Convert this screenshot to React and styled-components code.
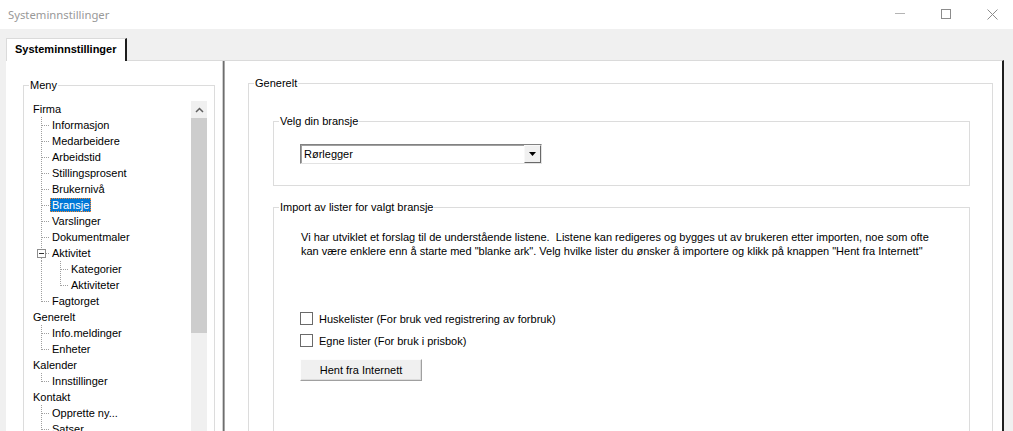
import React from "react";
import styled, { createGlobalStyle } from "styled-components";

const GlobalStyle = createGlobalStyle`
  html, body {
    margin: 0;
    padding: 0;
  }
  body {
    width: 1013px;
    height: 431px;
    overflow: hidden;
    background: #f0f0f0;
    font-family: "Liberation Sans", Arial, sans-serif;
    font-size: 11px;
    color: #000;
  }
`;

const Window = styled.div`
  width: 1013px;
  height: 431px;
  display: flex;
  flex-direction: column;
  overflow: hidden;
  background: #f0f0f0;
`;

const TitleBar = styled.div`
  height: 29px;
  flex: none;
  display: flex;
  justify-content: space-between;
  background: #fff;
`;

const Title = styled.span`
  padding-left: 8px;
  line-height: 29px;
  font-family: "Noto Sans", "Open Sans", sans-serif;
  font-size: 11.3px;
  color: #999;
`;

const Controls = styled.div`
  display: flex;
  margin-right: -2px;
`;

const ControlButton = styled.div`
  width: 46px;
  display: flex;
  justify-content: center;
  padding-top: 9px;
  svg {
    display: block;
  }
`;

const Workspace = styled.div`
  flex: 1;
  min-height: 0;
  display: flex;
  flex-direction: column;
  padding: 9px 9px 0 6px;
`;

const TabStrip = styled.div`
  display: flex;
  flex: none;
`;

const Tab = styled.div`
  position: relative;
  z-index: 1;
  box-sizing: border-box;
  width: 121px;
  height: 23px;
  margin-bottom: -1px;
  padding: 4px 0 0 8px;
  background: #fff;
  border: 1px solid #dadada;
  border-right: 2px solid #1e1e1e;
  border-bottom: none;
  font-weight: bold;
  white-space: nowrap;
`;

const TabPage = styled.div`
  flex: 1;
  min-height: 0;
  display: flex;
  background: #fff;
  border-top: 1px solid #dadada;
  border-right: 2px solid #1e1e1e;
  overflow: hidden;
`;

const LeftPanel = styled.div`
  width: 216px;
  flex: none;
  box-sizing: border-box;
  padding: 18px 7px 0 17px;
`;

const Splitter = styled.div`
  width: 3px;
  flex: none;
  background: linear-gradient(to right, #d0d0d0 0 1px, #6e6e6e 1px 2px, #a8a8a8 2px 3px);
`;

const RightPanel = styled.div`
  flex: 1;
  min-width: 0;
  padding: 16px 9px 0 23px;
`;

// group box: the legend sits on the top border, the body carries the inner spacing
const GroupBox = styled.fieldset`
  margin: ${(p) => p.$margin || "0"};
  min-width: 0;
  padding: 0;
  border: 1px solid #dcdcdc;
`;

const Legend = styled.legend`
  margin-left: 5px;
  padding: 0 1px;
  line-height: 13px;
`;

const GroupBody = styled.div`
  padding: ${(p) => p.$pad};
`;

/* ---------- tree view ---------- */

const TreeView = styled.div`
  display: flex;
`;

const TreeList = styled.div`
  flex: 1;
  padding-left: 4px;
`;

const TreeRow = styled.div`
  display: flex;
  align-items: center;
  height: 16px;
  white-space: nowrap;
  svg {
    display: block;
    flex: none;
  }
`;

const NodeLabel = styled.span`
  padding: 0 2px;
  line-height: 14px;
  color: ${(p) => (p.$selected ? "#fff" : "#000")};
  background: ${(p) => (p.$selected ? "#0078d7" : "transparent")};
  outline: ${(p) => (p.$selected ? "1px dotted #ff8728" : "none")};
  outline-offset: -1px;
`;

const ScrollBar = styled.div`
  width: 16px;
  flex: none;
  display: flex;
  flex-direction: column;
  background: #f0f0f0;
`;

const ScrollArrow = styled.div`
  height: 17px;
  display: flex;
  align-items: center;
  justify-content: center;
`;

const ScrollThumb = styled.div`
  height: 215px;
  background: #cdcdcd;
`;

const dot = { stroke: "#a0a0a0", strokeWidth: 1, strokeDasharray: "1 1" };

function Guide({ kind }) {
  return (
    <svg width="19" height="16" viewBox="0 0 19 16">
      {kind === "pipe" && <line x1="10.5" y1="0" x2="10.5" y2="16" {...dot} />}
      {kind === "tee" && (
        <>
          <line x1="10.5" y1="0" x2="10.5" y2="16" {...dot} />
          <line x1="11" y1="8.5" x2="19" y2="8.5" {...dot} />
        </>
      )}
      {kind === "elbow" && (
        <>
          <line x1="10.5" y1="0" x2="10.5" y2="9" {...dot} />
          <line x1="11" y1="8.5" x2="19" y2="8.5" {...dot} />
        </>
      )}
      {kind === "minus" && (
        <>
          <line x1="10.5" y1="0" x2="10.5" y2="4" {...dot} />
          <line x1="10.5" y1="13" x2="10.5" y2="16" {...dot} />
          <line x1="15" y1="8.5" x2="19" y2="8.5" {...dot} />
          <rect x="6.5" y="4.5" width="8" height="8" fill="#fff" stroke="#8e8e8e" />
          <line x1="8" y1="8.5" x2="13" y2="8.5" stroke="#333" />
        </>
      )}
    </svg>
  );
}

const menu = [
  { label: "Firma", guides: [] },
  { label: "Informasjon", guides: ["tee"] },
  { label: "Medarbeidere", guides: ["tee"] },
  { label: "Arbeidstid", guides: ["tee"] },
  { label: "Stillingsprosent", guides: ["tee"] },
  { label: "Brukernivå", guides: ["tee"] },
  { label: "Bransje", guides: ["tee"], selected: true },
  { label: "Varslinger", guides: ["tee"] },
  { label: "Dokumentmaler", guides: ["tee"] },
  { label: "Aktivitet", guides: ["minus"] },
  { label: "Kategorier", guides: ["pipe", "tee"] },
  { label: "Aktiviteter", guides: ["pipe", "elbow"] },
  { label: "Fagtorget", guides: ["elbow"] },
  { label: "Generelt", guides: [] },
  { label: "Info.meldinger", guides: ["tee"] },
  { label: "Enheter", guides: ["elbow"] },
  { label: "Kalender", guides: [] },
  { label: "Innstillinger", guides: ["elbow"] },
  { label: "Kontakt", guides: [] },
  { label: "Opprette ny...", guides: ["tee"] },
  { label: "Satser", guides: ["tee"] },
];

/* ---------- form controls ---------- */

const ComboBox = styled.div`
  box-sizing: border-box;
  width: 242px;
  height: 20px;
  display: flex;
  border: 1px solid;
  border-color: #828282 #e3e3e3 #e3e3e3 #828282;
  box-shadow: inset 1px 1px 0 #a0a0a0;
  background: #fff;
`;

const ComboText = styled.span`
  flex: 1;
  padding-left: 3px;
  line-height: 18px;
`;

const ComboButton = styled.div`
  box-sizing: border-box;
  width: 17px;
  display: flex;
  align-items: center;
  justify-content: center;
  background: #f0f0f0;
  border: 1px solid;
  border-color: #f8f8f8 #696969 #696969 #f8f8f8;
`;

const Intro = styled.p`
  margin: 0 0 0 1px;
  line-height: 14px;
  white-space: nowrap;
`;

const CheckList = styled.div`
  display: flex;
  flex-direction: column;
  gap: 5px;
  margin-top: 52px;
`;

const CheckRow = styled.label`
  display: flex;
  align-items: center;
  gap: 6px;
  height: 17px;
`;

const CheckBox = styled.span`
  box-sizing: border-box;
  width: 13px;
  height: 13px;
  border: 1px solid #6a6a6a;
  background: #fff;
`;

const PushButton = styled.div`
  box-sizing: border-box;
  width: 122px;
  height: 22px;
  margin-top: 10px;
  display: flex;
  align-items: center;
  justify-content: center;
  background: #f0f0f0;
  border: 1px solid;
  border-color: #fdfdfd #a0a0a0 #a0a0a0 #fdfdfd;
  box-shadow: inset -1px -1px 0 #dcdcdc;
`;

export default function App() {
  return (
    <Window>
      <GlobalStyle />
      <TitleBar>
        <Title>Systeminnstillinger</Title>
        <Controls>
          <ControlButton>
            <svg width="10" height="10" viewBox="0 0 10 10">
              <line x1="0" y1="4.5" x2="10" y2="4.5" stroke="#b4b4b4" />
            </svg>
          </ControlButton>
          <ControlButton>
            <svg width="10" height="10" viewBox="0 0 10 10">
              <rect x="0.5" y="0.5" width="9" height="9" fill="none" stroke="#8c8c8c" />
            </svg>
          </ControlButton>
          <ControlButton>
            <svg width="11" height="11" viewBox="0 0 11 11">
              <path d="M0.5 0.5 L10.5 10.5 M10.5 0.5 L0.5 10.5" stroke="#8c8c8c" />
            </svg>
          </ControlButton>
        </Controls>
      </TitleBar>

      <Workspace>
        <TabStrip>
          <Tab>Systeminnstillinger</Tab>
        </TabStrip>

        <TabPage>
          <LeftPanel>
            <GroupBox>
              <Legend>Meny</Legend>
              <GroupBody $pad="9px 7px 0 3px">
                <TreeView>
                  <TreeList>
                    {menu.map((node) => (
                      <TreeRow key={node.label}>
                        {node.guides.map((g, i) => (
                          <Guide key={i} kind={g} />
                        ))}
                        <NodeLabel $selected={node.selected}>{node.label}</NodeLabel>
                      </TreeRow>
                    ))}
                  </TreeList>
                  <ScrollBar>
                    <ScrollArrow>
                      <svg width="9" height="6" viewBox="0 0 9 6">
                        <path d="M1 5 L4.5 1.5 L8 5" fill="none" stroke="#606060" strokeWidth="1.5" />
                      </svg>
                    </ScrollArrow>
                    <ScrollThumb />
                  </ScrollBar>
                </TreeView>
              </GroupBody>
            </GroupBox>
          </LeftPanel>

          <Splitter />

          <RightPanel>
            <GroupBox>
              <Legend>Generelt</Legend>
              <GroupBody $pad="25px 22px 0 24px">
                <GroupBox>
                  <Legend>Velg din bransje</Legend>
                  <GroupBody $pad="16px 0 21px 26px">
                    <ComboBox>
                      <ComboText>Rørlegger</ComboText>
                      <ComboButton>
                        <svg width="7" height="4" viewBox="0 0 7 4">
                          <path d="M0 0 H7 L3.5 4 Z" fill="#000" />
                        </svg>
                      </ComboButton>
                    </ComboBox>
                  </GroupBody>
                </GroupBox>

                <GroupBox $margin="15px 0 0">
                  <Legend>Import av lister for valgt bransje</Legend>
                  <GroupBody $pad="16px 0 80px 26px">
                    <Intro>
                      Vi har utviklet et forslag til de understående listene.&nbsp; Listene kan redigeres og bygges ut av brukeren etter importen, noe som ofte
                      <br />
                      kan være enklere enn å starte med "blanke ark". Velg hvilke lister du ønsker å importere og klikk på knappen "Hent fra Internett"
                    </Intro>
                    <CheckList>
                      <CheckRow>
                        <CheckBox />
                        Huskelister (For bruk ved registrering av forbruk)
                      </CheckRow>
                      <CheckRow>
                        <CheckBox />
                        Egne lister (For bruk i prisbok)
                      </CheckRow>
                    </CheckList>
                    <PushButton>Hent fra Internett</PushButton>
                  </GroupBody>
                </GroupBox>
              </GroupBody>
            </GroupBox>
          </RightPanel>
        </TabPage>
      </Workspace>
    </Window>
  );
}
